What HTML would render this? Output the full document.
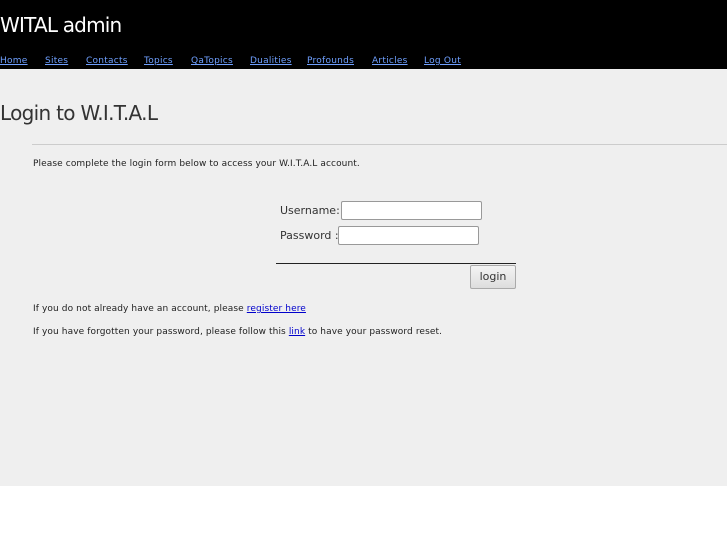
<!DOCTYPE html>
<html><head><style>
body{margin:0;width:727px;height:545px;background:#fff;font-family:"DejaVu Sans","Liberation Sans",sans-serif;position:relative;overflow:hidden}
.hd{position:absolute;left:0;top:0;width:727px;height:69px;background:#000}
.hd h1{position:absolute;left:0;top:13px;margin:0;font-weight:normal;color:#fff;font-size:20px;font-family:"DejaVu Sans",sans-serif;letter-spacing:-0.8px}
.nav{position:absolute;top:56px;left:0;font-size:9px;white-space:nowrap}
.nav a{position:absolute;color:#6fa0ff;text-decoration:underline;letter-spacing:0.25px}
.main{position:absolute;left:0;top:69px;width:727px;height:417px;background:#efefef}
.t{position:absolute;left:0;top:101px;font-size:20px;color:#333;letter-spacing:-0.7px}
.hr{position:absolute;left:32px;top:144px;width:695px;height:1px;background:#ccc}
.s{position:absolute;font-size:9px;color:#222;white-space:nowrap;letter-spacing:0.1px}
.s a{color:#00c;text-decoration:underline}
.lbl{position:absolute;font-size:11px;color:#333}
.in{position:absolute;height:17px;border:1px solid #999;border-radius:2px;background:#fff}
.btn{position:absolute;left:470px;top:265px;width:44px;height:22px;border:1px solid #aaa;border-radius:2px;background:linear-gradient(#f4f4f4,#ddd);font-size:11px;color:#333;text-align:center;line-height:22px}
</style></head><body>
<div class="hd"><h1>WITAL admin</h1>
<div class="nav">
<a style="left:0">Home</a><a style="left:45px">Sites</a><a style="left:86px">Contacts</a><a style="left:144px">Topics</a><a style="left:191px">QaTopics</a><a style="left:250px">Dualities</a><a style="left:307px">Profounds</a><a style="left:372px">Articles</a><a style="left:424px">Log Out</a>
</div></div>
<div class="main"></div>
<div class="t">Login to W.I.T.A.L</div>
<div class="hr"></div>
<div class="s" style="left:33px;top:159px">Please complete the login form below to access your W.I.T.A.L account.</div>
<div class="lbl" style="left:280px;top:204px">Username:</div>
<div class="in" style="left:341px;top:201px;width:139px"></div>
<div class="lbl" style="left:280px;top:229px">Password :</div>
<div class="in" style="left:338px;top:226px;width:139px"></div>
<div style="position:absolute;left:276px;top:263px;width:240px;height:1px;background:#222"></div>
<div class="btn">login</div>
<div class="s" style="left:33px;top:304px">If you do not already have an account, please <a>register here</a></div>
<div class="s" style="left:33px;top:327px">If you have forgotten your password, please follow this <a>link</a> to have your password reset.</div>
</body></html>
